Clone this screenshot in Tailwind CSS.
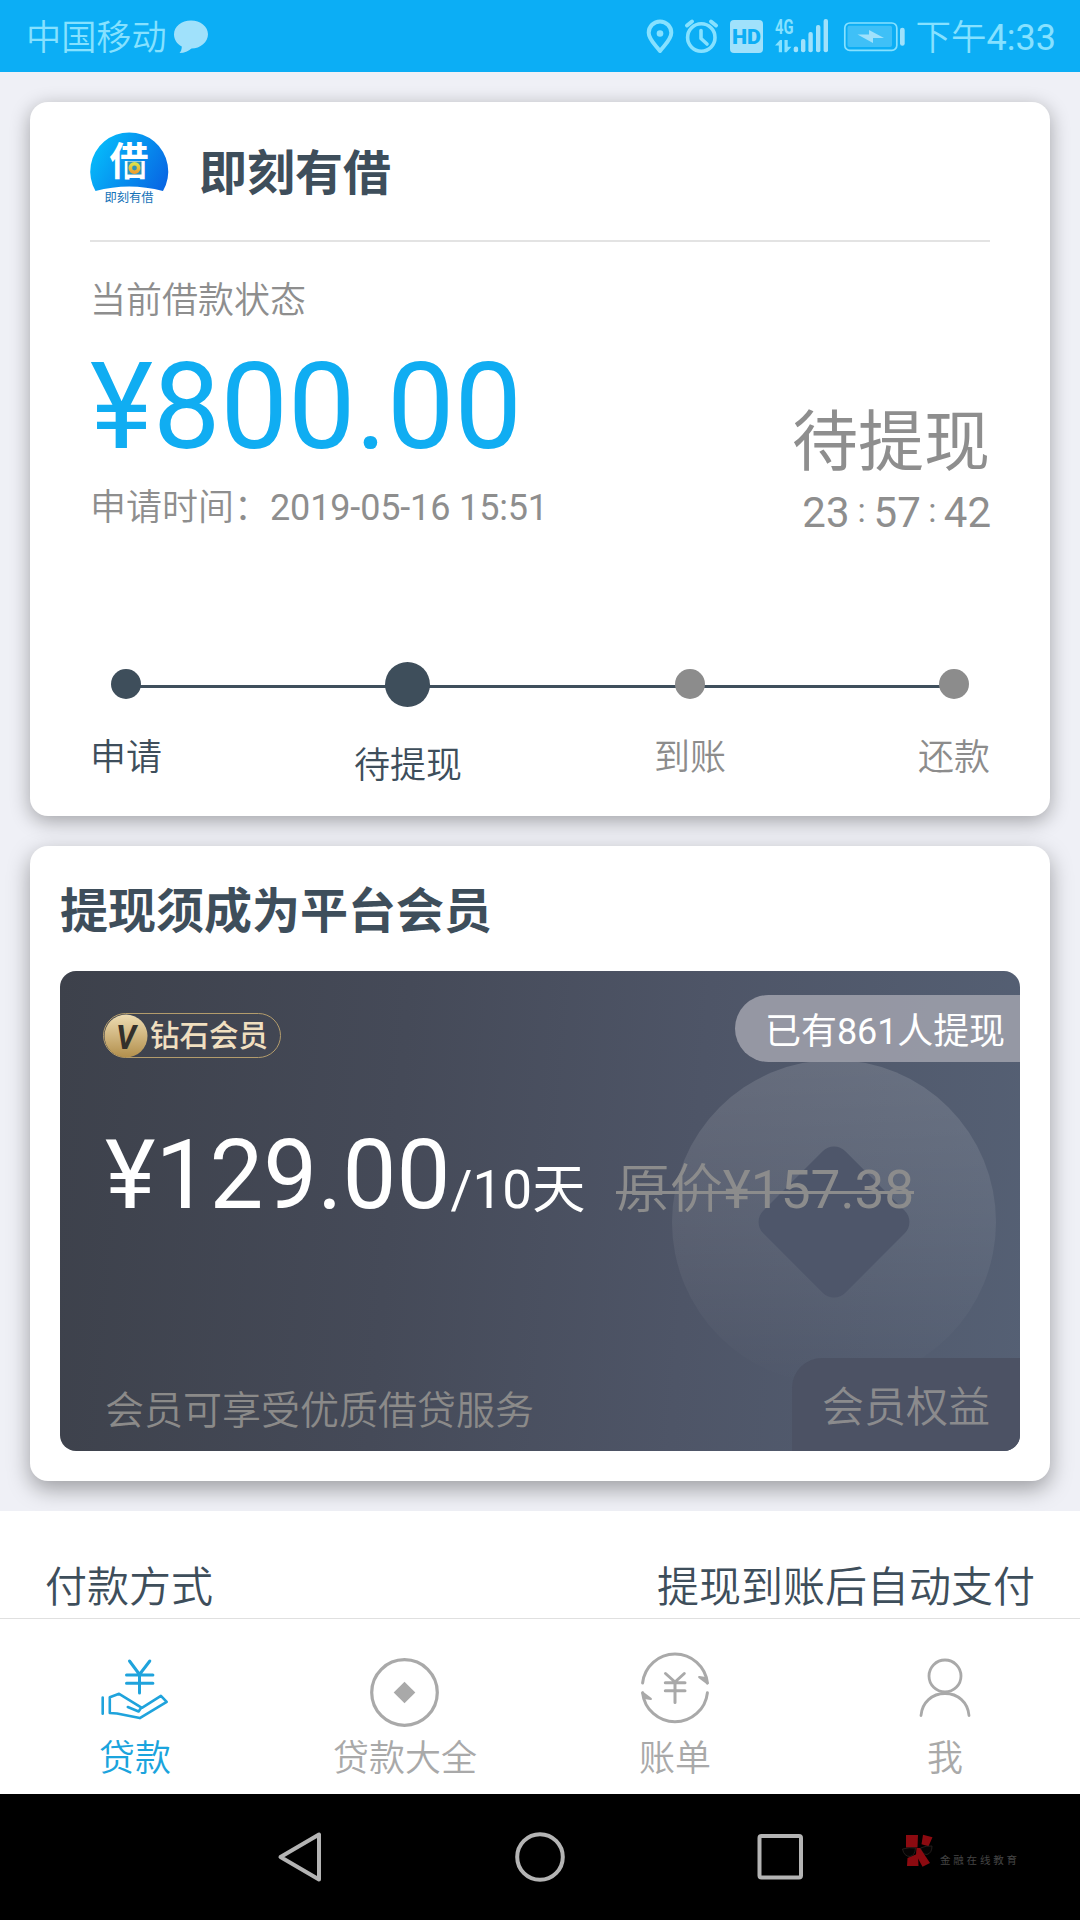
<!DOCTYPE html>
<html lang="zh-CN">
<head>
<meta charset="utf-8">
<title>即刻有借</title>
<script src="https://cdn.jsdelivr.net/npm/@tailwindcss/browser@4"></script>
</head>
<body class="bg-black [font-family:Roboto,'Noto_Sans_CJK_SC',sans-serif]">
<div class="w-[1080px] h-[1920px] flex flex-col overflow-hidden bg-[#eff0f6]">

  <!-- Status bar -->
  <header class="h-[72px] shrink-0 bg-[#0caef5] text-[#86e1ff] flex items-center justify-between pl-[26px] pr-[24px]">
    <div class="flex items-center">
      <span class="text-[35.200px] leading-[72px] font-[350] pt-[4px]">中国移动</span>
      <svg class="w-[36px] h-[36px] ml-[6px]" viewBox="0 0 36 36" fill="#a0e1fb"><path d="M18 2.500c9.400 0 17 6 17 13.700s-7.600 14.300-16.500 14.300c-3 2.500-7 4.500-12 4.500 1.500-1.500 2.300-4 2.300-6.500C4 26 1 21.500 1 16.200 1 8.500 8.600 2.500 18 2.500z"/></svg>
    </div>
    <div class="flex items-center">
      <svg class="w-[272px] h-[72px]" viewBox="644 0 272 72" fill="none" stroke="#86e1ff">
        <path d="M660 51c-4.500-6-11.300-11.500-11.300-18.300a11.300 11.300 0 0 1 22.600 0C671.300 39.500 664.500 45 660 51z" stroke-width="4" stroke-linejoin="round"/>
        <circle cx="660" cy="33.500" r="3.300" fill="#86e1ff" stroke="none"/>
        <circle cx="701.300" cy="37.500" r="13.700" stroke-width="3.600"/>
        <path d="M701 30.500v8l6 5.500" stroke-width="3.600" stroke-linecap="round" stroke-linejoin="round"/>
        <path d="M687 25.500l5-4M716 25.500l-5-4" stroke-width="4" stroke-linecap="round"/>
        <rect x="730" y="20" width="33" height="33" rx="4" fill="#a0e1fb" stroke="none"/>
        <text x="746.500" y="44" text-anchor="middle" font-family="Roboto" font-weight="900" font-size="21" textLength="29" lengthAdjust="spacingAndGlyphs" fill="#0caef5" stroke="none">HD</text>
        <text x="775" y="34" font-family="Roboto" font-weight="700" font-size="20" textLength="18.500" lengthAdjust="spacingAndGlyphs" fill="#86e1ff" stroke="none">4G</text>
        <path d="M782 52.300V40h-2l-5 5.500h3.800v6.800zM784.500 40v12.300h2l5-5.500h-3.800V40z" fill="#86e1ff" stroke="none"/>
        <g fill="#a0e1fb" stroke="none">
          <rect x="793.700" y="46.500" width="4.400" height="5.800" rx="2"/><rect x="801" y="39" width="4.400" height="13.300" rx="2"/><rect x="808.400" y="32" width="4.400" height="20.300" rx="2"/><rect x="816" y="25" width="4.400" height="27.300" rx="2"/><rect x="823.600" y="19" width="4.400" height="33.300" rx="2"/>
          <rect x="900" y="27.700" width="4.700" height="18" rx="2.300"/>
          <path d="M857.500 34.500h11.500v-4.500l15 8h-11v5z"/>
        </g>
        <rect x="844.800" y="23" width="52" height="27.400" rx="5" stroke-width="1.700"/>
        <rect x="847.500" y="25.700" width="44.500" height="21.300" rx="2" fill="#a0e1fb" fill-opacity=".35" stroke="none"/>
      </svg>
      <span class="text-[35.500px] leading-[72px] font-[350] pt-[4px]">下午<span class="font-normal text-[36px]">4:33</span></span>
    </div>
  </header>

  <main class="h-[1439px] shrink-0 px-[30px] pt-[30px] flex flex-col gap-[30px]">
    <!-- Loan state -->
    <section class="h-[714px] shrink-0 rounded-[18px] bg-white px-[60px] shadow-[0_5px_20px_rgba(0,0,0,0.33)]">
      <div class="h-[140px] border-b-2 border-[#e3e3e3] flex items-center gap-[31px]">
        <svg class="w-[78px] h-[78px] overflow-visible" viewBox="0 0 78 78">
          <defs>
            <linearGradient id="logo" x1="0" y1=".3" x2="1" y2=".75"><stop offset="0" stop-color="#05bdfb"/><stop offset="1" stop-color="#0868e4"/></linearGradient>
            <linearGradient id="coin" x1="0" y1="0" x2="0" y2="1"><stop offset="0" stop-color="#dbe04a"/><stop offset="1" stop-color="#f0a030"/></linearGradient>
          </defs>
          <path d="M5.500 59A39 39 0 1 1 73 59Q39 50 5.500 59z" fill="url(#logo)"/>
          <text x="39" y="42.500" text-anchor="middle" font-family="'Noto Sans CJK SC'" font-weight="700" font-size="39" fill="#fff">借</text>
          <rect x="37.500" y="29.500" width="14" height="13" fill="#2e94b8"/>
          <circle cx="44.500" cy="36" r="4.200" fill="none" stroke="url(#coin)" stroke-width="3.600"/>
          <text x="39" y="69.500" text-anchor="middle" font-family="'Noto Sans CJK SC'" font-size="12.300" fill="#1673b8">即刻有借</text>
        </svg>
        <h1 class="text-[48px] leading-[60px] font-bold text-[#3e4e5b] pt-[5px]">即刻有借</h1>
      </div>
      <div class="mt-[40px] h-[252px] flex justify-between text-[#8e8e8e]">
        <div class="flex flex-col">
          <p class="text-[36px] leading-[38px] h-[36px] font-[350]">当前借款状态</p>
          <p class="mt-[29px] text-[120px] leading-[120px] text-[#10adf2]">¥800.00</p>
          <p class="mt-[23px] text-[36px] leading-[36px] whitespace-nowrap"><span class="font-[350]">申请时间：</span><span class="tracking-[-0.150px]">2019-05-16 15:51</span></p>
        </div>
        <div class="flex flex-col items-end self-end">
          <p class="text-[66px] leading-[66px]">待提现</p>
          <p class="mt-[16px] mr-[-1px] flex text-[42px] leading-[42px]"><span>23</span><span class="w-[24px] text-center text-[34px] leading-[36px]">:</span><span>57</span><span class="w-[23px] text-center text-[34px] leading-[36px]">:</span><span>42</span></p>
        </div>
      </div>
      <div class="relative mt-[128px] flex justify-between text-[36px] leading-[36px] font-[350]">
        <div class="absolute left-[36px] right-[36px] top-[23px] h-[3px] bg-[#3f4f5c]"></div>
        <div class="relative flex flex-col items-center pt-[7px] text-[#3e4e5b]"><i class="size-[30px] rounded-full bg-[#3e4e5b]"></i><span class="mt-[41px]">申请</span></div>
        <div class="relative flex flex-col items-center text-[#3e4e5b]"><i class="size-[45px] rounded-full bg-[#3e4e5b]"></i><span class="mt-[41px]">待提现</span></div>
        <div class="relative flex flex-col items-center pt-[7px] text-[#8c8c8c]"><i class="size-[30px] rounded-full bg-[#8c8c8c]"></i><span class="mt-[41px]">到账</span></div>
        <div class="relative flex flex-col items-center pt-[7px] text-[#8c8c8c]"><i class="size-[30px] rounded-full bg-[#8c8c8c]"></i><span class="mt-[41px]">还款</span></div>
      </div>
    </section>

    <!-- Membership -->
    <section class="h-[635px] shrink-0 rounded-[18px] bg-white px-[30px] shadow-[0_8px_22px_rgba(0,0,0,0.35)]">
      <h2 class="h-[125px] pt-[36px] text-[48px] leading-[60px] font-bold text-[#3e4e5b]">提现须成为平台会员</h2>
      <div class="relative h-[480px] rounded-[16px] overflow-hidden bg-linear-[95deg,#3d414b_0%,#454a58_35%,#4e5567_65%,#556074_100%]">
        <svg class="absolute left-[612px] top-[89px] w-[324px] h-[324px]" viewBox="0 0 324 324">
          <defs><linearGradient id="disc" x1="0" y1="0" x2="0" y2="1"><stop offset="0" stop-color="#fff" stop-opacity=".13"/><stop offset=".5" stop-color="#fff" stop-opacity=".07"/><stop offset="1" stop-color="#fff" stop-opacity="0"/></linearGradient></defs>
          <circle cx="162" cy="162" r="162" fill="url(#disc)"/>
          <rect x="104" y="104" width="116" height="116" rx="16" transform="rotate(45 162 162)" fill="#4e566a"/>
        </svg>
        <div class="absolute right-0 top-[24px] h-[67px] rounded-l-full bg-[#999ba7]/95 pl-[30px] pr-[15px] pt-[4px] text-[36px] leading-[67px] text-white whitespace-nowrap tracking-[-0.100px]">已有861人提现</div>
        <div class="absolute right-0 bottom-0 w-[228px] h-[93px] rounded-tl-[30px] bg-[#4c5264] pl-[30px] pt-[2px] text-[42px] leading-[96px] text-[#8b8b8d] whitespace-nowrap font-[350]">会员权益</div>
        <div class="relative pl-[43px] pt-[42px] flex flex-col items-start">
          <div class="w-[178px] h-[45px] rounded-full border border-[#b39c6c] flex items-center">
            <svg class="w-[44px] h-[44px] shrink-0" viewBox="0 0 44 44">
              <defs><linearGradient id="gold" x1="0" y1="0" x2="0" y2="1"><stop offset="0" stop-color="#eedcb2"/><stop offset="1" stop-color="#b28f4c"/></linearGradient></defs>
              <circle cx="22" cy="22" r="21.500" fill="url(#gold)"/>
              <text x="22" y="35" text-anchor="middle" font-family="Roboto" font-style="italic" font-weight="700" font-size="34" textLength="20" lengthAdjust="spacingAndGlyphs" fill="#33302b">V</text>
            </svg>
            <span class="ml-[2px] text-[29.500px] leading-[43px] pt-[1px] font-medium text-[#f0dfc0] whitespace-nowrap">钻石会员</span>
          </div>
          <p class="mt-[69px] ml-[2px] flex items-baseline whitespace-nowrap text-[53.200px] leading-[96px] text-white"><span class="text-[96px]">¥129.00</span><span>/10天</span><span class="ml-[31px] relative text-[#8c8c8c] font-[350]">原价<span class="font-normal">¥157.38</span><i class="absolute left-0 right-0 top-[49px] h-[3px] bg-[#8c8c8c]"></i></span></p>
          <p class="mt-[149px] ml-[2px] text-[39px] leading-[48px] text-[#8b8a89] font-[350]">会员可享受优质借贷服务</p>
        </div>
      </div>
    </section>
  </main>

  <!-- Payment method -->
  <section class="h-[107px] shrink-0 bg-white px-[45px] pt-[47px] flex justify-between text-[42px] leading-[60px] text-[#3e4e5b] font-[350]">
    <span>付款方式</span><span>提现到账后自动支付</span>
  </section>

  <!-- Tabs -->
  <nav class="h-[176px] shrink-0 border-t border-[#e0e0e0] bg-white grid grid-cols-4 text-[36px] leading-[48px] text-[#a9a9a9] text-center font-[350]">
    <a class="flex flex-col items-center pt-[31px] text-[#1ba4dd]">
      <svg class="w-[80px] h-[84px]" viewBox="95 1650 80 84" fill="none" stroke="#1fa3dc" stroke-width="3" stroke-linecap="round" stroke-linejoin="round"><path d="M129.500 1661l10 13.500 10.300-13.500M139.500 1674.500v18.500M126.500 1675h26.400M126.500 1683.300h26.400"/><path stroke-width="2.600" d="M102.700 1697.500v16.300M109.800 1713v-15.700l9.300-3.500 22.800 14 19-12 5.800 6-26.900 16.300-22.800-4.600zM127.800 1707l10.800 4.500 2.800-4"/></svg>
      <span class="mt-[1px]">贷款</span>
    </a>
    <a class="flex flex-col items-center pt-[31px]">
      <svg class="w-[80px] h-[84px]" viewBox="365 1650 80 84"><circle cx="404.500" cy="1692.500" r="32.800" fill="none" stroke="#a9a9a9" stroke-width="3.200"/><path d="M404.500 1681.700l10.800 10.800-10.800 10.800-10.800-10.800z" fill="#a9a9a9"/></svg>
      <span class="mt-[1px]">贷款大全</span>
    </a>
    <a class="flex flex-col items-center pt-[31px]">
      <svg class="w-[80px] h-[84px]" viewBox="635 1650 80 84" fill="none" stroke="#a9a9a9" stroke-width="3" stroke-linecap="round" stroke-linejoin="round"><path d="M642.600 1683a32.600 32.600 0 0 1 64.800 0M707.400 1692.800a32.600 32.600 0 0 1-64.800 0"/><path d="M707.500 1683.300l-8.300-6.300 6.300 1zM642.500 1692.700l8.300 6.300-6.300-1z" fill="#a9a9a9" stroke-width="2.200"/><path d="M665.500 1673.500l9.500 8.500 9.300-8.500M675 1682v20.500M665.300 1682.700h19.700M665.300 1690.700h19.700"/></svg>
      <span class="mt-[1px]">账单</span>
    </a>
    <a class="flex flex-col items-center pt-[31px]">
      <svg class="w-[80px] h-[84px]" viewBox="905 1650 80 84" fill="none" stroke="#a9a9a9" stroke-width="2.800" stroke-linecap="round"><circle cx="945" cy="1676" r="16"/><path d="M921 1715.500c1-13 11-22 24-22s23 9 24 22"/></svg>
      <span class="mt-[1px]">我</span>
    </a>
  </nav>

  <!-- System navigation -->
  <footer class="h-[126px] shrink-0 bg-black flex">
    <svg class="w-[900px] h-[126px]" viewBox="0 1794 900 126" fill="none" stroke="#b4b4b4" stroke-width="4" stroke-linejoin="round"><path d="M280.500 1857l38.500-22.500v45z"/><circle cx="540" cy="1857" r="22.800"/><rect x="759.500" y="1836" width="41.500" height="41.500" rx="2"/></svg>
    <svg class="w-[36px] h-[126px]" viewBox="900 1794 36 126">
      <g fill="#8c0a10"><path d="M906 1835h12l-.500 12.500H906zM923 1834.700l9.500 2.500-4 9-7-2zM907 1866l.500-8 6-2.500 4.500-2 .500 12.500z"/></g>
      <g fill="#060404" stroke="#2b2422" stroke-width=".8"><path d="M902.500 1849q7-2 13-1-.500 7.500-5.500 8.500-6 0-7.500-7.500zM920.500 1848q5.500-2.500 11.500-2 0 7-5 8.500-5 0-6.500-6.500z"/></g>
      <path d="M916.500 1848h3.500l10 15-7.500 3.700-6.500-12z" fill="#8c0a10"/>
    </svg>
    <span class="ml-[4px] mt-[58px] text-[10.500px] leading-[18px] tracking-[2.800px] text-[#454545]">金融在线教育</span>
  </footer>
</div>
</body>
</html>
